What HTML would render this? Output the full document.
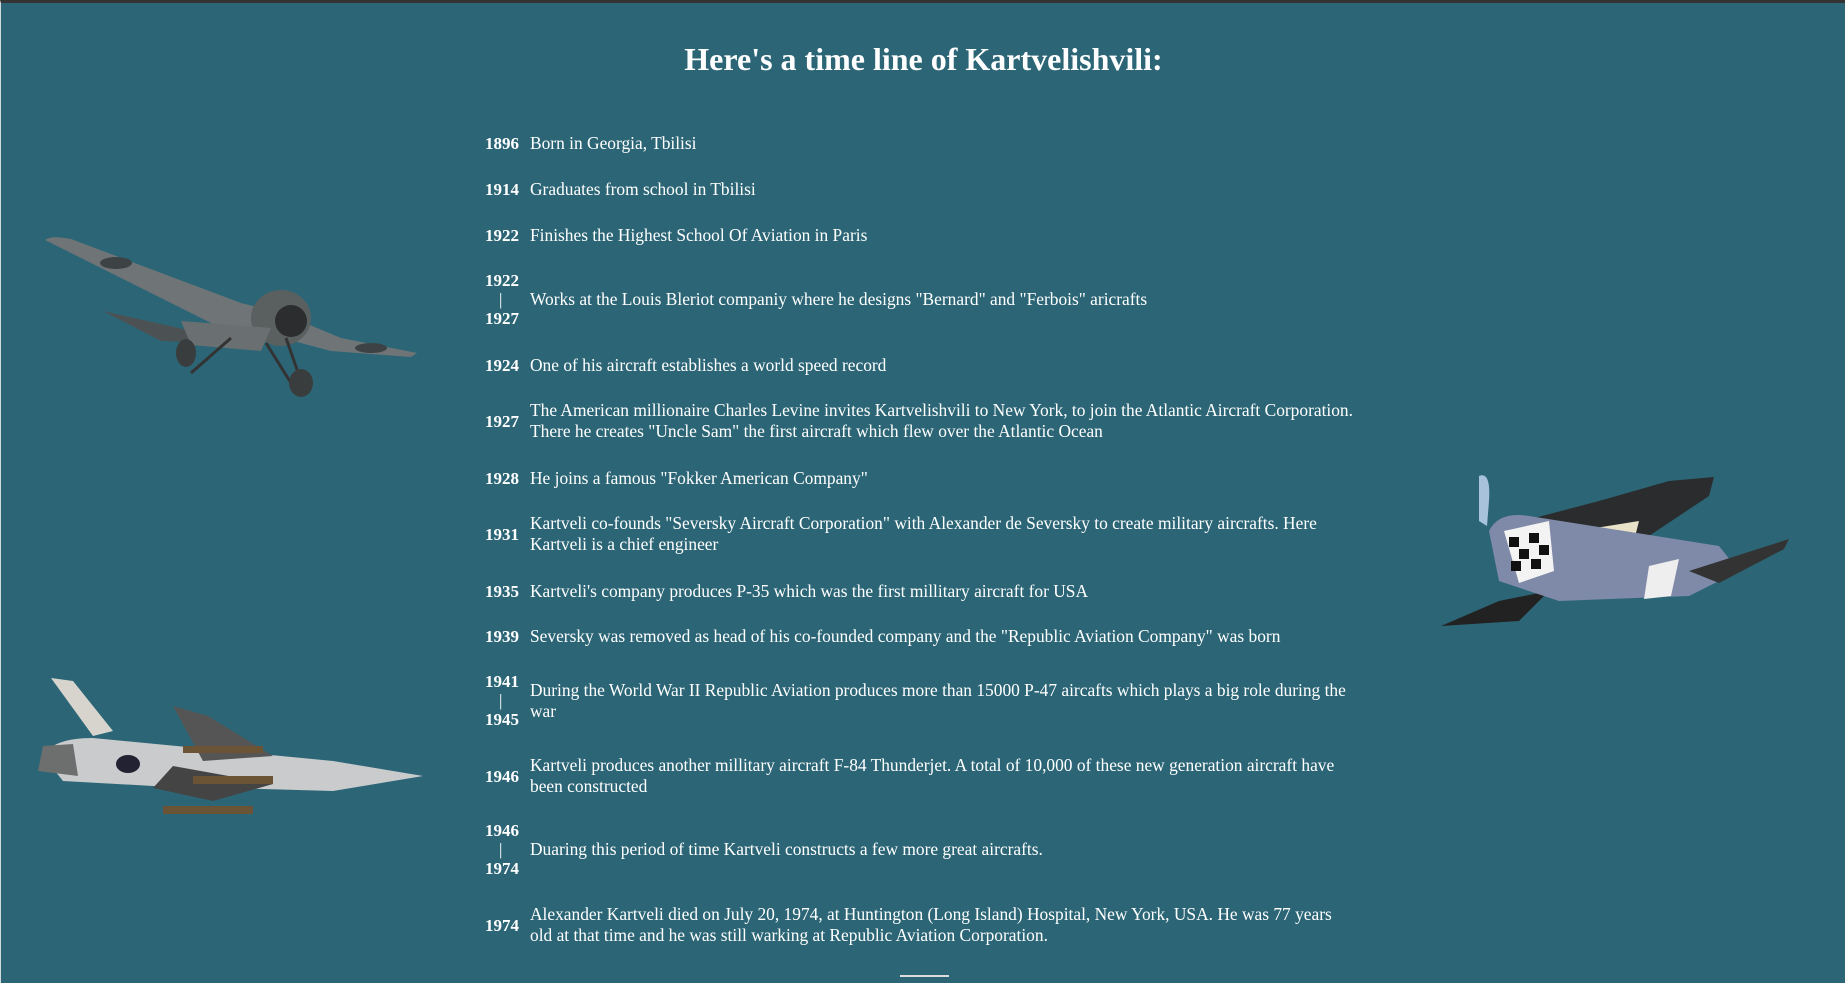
<!DOCTYPE html>
<html><head><meta charset="utf-8"><style>
html,body{margin:0;padding:0}
body{width:1845px;height:983px;background:#2c6676;position:relative;overflow:hidden;font-family:"Liberation Serif",serif;color:#fff;border-top:3px solid #333;box-sizing:border-box;border-left:1px solid #cfd8da}
h1{position:absolute;top:38px;left:0;width:1845px;text-align:center;margin:0;font-size:32px;font-weight:bold}
.r{position:absolute;left:484px;width:900px;display:flex;align-items:center;font-size:17.4px;line-height:21px}
.y{width:45px;font-weight:bold;text-align:left;flex:none;font-size:17px}
.t{width:826px}
.yc{display:flex;flex-direction:column;line-height:19px}
.yc span:nth-child(2){font-weight:normal;padding-left:14px}
hr{position:absolute;top:972px;left:899px;width:49px;margin:0;border:0;border-top:2px solid #ddd}
svg{position:absolute}
</style></head><body>
<h1>Here's a time line of Kartvelishvili:</h1>

<div class="r" style="top:130px"><div class="y">1896</div><div class="t">Born in Georgia, Tbilisi</div></div>
<div class="r" style="top:176px"><div class="y">1914</div><div class="t">Graduates from school in Tbilisi</div></div>
<div class="r" style="top:222px"><div class="y">1922</div><div class="t">Finishes the Highest School Of Aviation in Paris</div></div>
<div class="r" style="top:268px"><div class="y yc"><span>1922</span><span>|</span><span>1927</span></div><div class="t">Works at the Louis Bleriot companiy where he designs "Bernard" and "Ferbois" aricrafts</div></div>
<div class="r" style="top:352px"><div class="y">1924</div><div class="t">One of his aircraft establishes a world speed record</div></div>
<div class="r" style="top:397px"><div class="y">1927</div><div class="t">The American millionaire Charles Levine invites Kartvelishvili to New York, to join the Atlantic Aircraft Corporation. There he creates "Uncle Sam" the first aircraft which flew over the Atlantic Ocean</div></div>
<div class="r" style="top:465px"><div class="y">1928</div><div class="t">He joins a famous "Fokker American Company"</div></div>
<div class="r" style="top:510px"><div class="y">1931</div><div class="t">Kartveli co-founds "Seversky Aircraft Corporation" with Alexander de Seversky to create military aircrafts. Here Kartveli is a chief engineer</div></div>
<div class="r" style="top:578px"><div class="y">1935</div><div class="t">Kartveli's company produces P-35 which was the first millitary aircraft for USA</div></div>
<div class="r" style="top:623px"><div class="y">1939</div><div class="t">Seversky was removed as head of his co-founded company and the "Republic Aviation Company" was born</div></div>
<div class="r" style="top:669px"><div class="y yc"><span>1941</span><span>|</span><span>1945</span></div><div class="t">During the World War II Republic Aviation produces more than 15000 P-47 aircafts which plays a big role during the war</div></div>
<div class="r" style="top:752px"><div class="y">1946</div><div class="t">Kartveli produces another millitary aircraft F-84 Thunderjet. A total of 10,000 of these new generation aircraft have been constructed</div></div>
<div class="r" style="top:818px"><div class="y yc"><span>1946</span><span>|</span><span>1974</span></div><div class="t">Duaring this period of time Kartveli constructs a few more great aircrafts.</div></div>
<div class="r" style="top:901px"><div class="y">1974</div><div class="t">Alexander Kartveli died on July 20, 1974, at Huntington (Long Island) Hospital, New York, USA. He was 77 years old at that time and he was still warking at Republic Aviation Corporation.</div></div>
<hr>

<svg style="left:40px;top:230px" width="380" height="170" viewBox="0 0 380 170">
<path d="M4 7 Q10 2 30 6 L200 70 L240 80 L300 105 L376 120 L370 124 L290 118 L230 102 L180 95 Z" fill="#6f7577"/>
<path d="M62 78 L160 100 L180 110 L120 108 Z" fill="#4c5254"/>
<ellipse cx="240" cy="85" rx="30" ry="28" fill="#5a5f60"/>
<ellipse cx="250" cy="88" rx="16" ry="16" fill="#2b2d2e"/>
<path d="M140 88 L230 95 L220 118 L150 112 Z" fill="#6a7072"/>
<path d="M225 110 L250 150 M245 105 L260 148 M190 105 L150 140" stroke="#333" stroke-width="3"/>
<ellipse cx="145" cy="120" rx="10" ry="14" fill="#3a3d3e"/>
<ellipse cx="260" cy="150" rx="12" ry="14" fill="#3a3d3e"/>
<ellipse cx="75" cy="30" rx="16" ry="6" fill="#3d4244"/>
<ellipse cx="330" cy="115" rx="16" ry="5" fill="#3d4244"/>
</svg>

<svg style="left:1438px;top:468px" width="355" height="160" viewBox="0 0 355 160">
<path d="M40 5 Q52 0 50 30 L48 55 L40 50 Z" fill="#a9c2dc"/>
<path d="M2 155 L60 130 L110 120 L80 150 Z" fill="#222"/>
<path d="M65 55 L160 30 L230 10 L275 6 L270 25 L210 65 L180 85 L100 110 Z" fill="#2a2c2e"/>
<path d="M150 58 L200 50 L195 70 L140 80 Z M120 80 L180 72 L170 92 L110 100 Z" fill="#e8e2c8"/>
<path d="M50 60 Q60 40 90 45 L280 75 L300 100 L250 125 L120 130 L60 110 Z" fill="#7f8aa8"/>
<path d="M65 60 L110 50 L115 100 L80 112 Z" fill="#f3f3f3"/>
<path d="M70 66 h10v10h-10zM90 62h10v10h-10zM80 78h10v10h-10zM100 74h10v10h-10zM72 90h10v10h-10zM92 88h10v10h-10z" fill="#111"/>
<path d="M210 95 L240 88 L232 125 L205 128 Z" fill="#eee"/>
<path d="M250 100 L350 68 L345 78 L280 112 Z" fill="#333"/>
</svg>

<svg style="left:32px;top:673px" width="400" height="170" viewBox="0 0 400 170">
<path d="M18 2 L40 5 L80 55 L60 60 Z" fill="#d6d4cc"/>
<path d="M10 80 Q20 62 60 62 L300 85 L390 100 L300 115 L120 110 L30 105 Z" fill="#c9cbcd"/>
<path d="M10 70 L40 68 L45 100 L5 95 Z" fill="#6d6e6e"/>
<path d="M140 30 L175 40 L240 80 L170 85 Z" fill="#555"/>
<path d="M140 90 L240 108 L180 125 L120 112 Z" fill="#444"/>
<rect x="130" y="130" width="90" height="8" fill="#6b5335"/>
<rect x="150" y="70" width="80" height="7" fill="#6b5335"/>
<rect x="160" y="100" width="80" height="8" fill="#6b5335"/>
<ellipse cx="95" cy="88" rx="12" ry="9" fill="#223"/>
</svg>
</body></html>
